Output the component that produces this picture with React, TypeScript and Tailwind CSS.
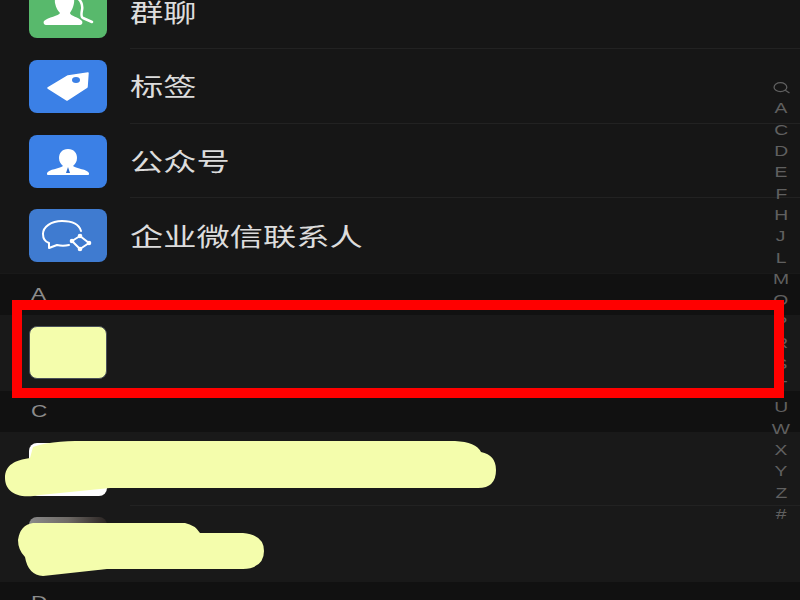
import type { ReactNode } from 'react';

const letters = ['A', 'C', 'D', 'E', 'F', 'H', 'J', 'L', 'M', 'O', 'P', 'R', 'S', 'T', 'U', 'W', 'X', 'Y', 'Z', '#'];

function IconBox({ className, children }: { className: string; children?: ReactNode }) {
  return (
    <div className={`h-[53px] w-[78px] shrink-0 overflow-hidden rounded-lg ${className}`}>
      {children && (
        <svg viewBox="0 0 78 53" className="h-full w-full">
          {children}
        </svg>
      )}
    </div>
  );
}

function Row({ icon, label, divider = true, dark = true }: { icon: ReactNode; label?: string; divider?: boolean; dark?: boolean }) {
  return (
    <div className={`flex h-[74.67px] items-center pl-[29px] ${dark ? 'bg-[#161616]' : 'bg-[#191919]'}`}>
      {icon}
      <div className={`ml-[23px] flex h-full flex-1 items-center ${divider ? 'border-b border-[#222222]' : ''}`}>
        {label && (
          <span className="origin-left scale-x-[1.33] whitespace-nowrap font-['Noto_Sans_CJK_SC',sans-serif] text-[25px] text-[#dcdcdc]">
            {label}
          </span>
        )}
      </div>
    </div>
  );
}

function Section({ letter }: { letter: string }) {
  return (
    <div className="flex h-[42px] items-center border-t border-[#191919] bg-[#111111] pl-[31px]">
      <span className="origin-left scale-x-[1.33] font-['Liberation_Sans',sans-serif] text-[17px] text-[#8c8c8c]">{letter}</span>
    </div>
  );
}

export default function App() {
  return (
    <div className="relative h-[600px] w-[800px] overflow-hidden bg-[#161616]">
      <div className="-mt-[25.5px]">
        <Row
          label="群聊"
          icon={
            <IconBox className="bg-[#58b96c]">
              <path d="M46 12 C52 14 54 20 53 25 C52 30 52 32 54 33 L63 37" fill="none" stroke="#fff" strokeWidth="2.5" strokeLinecap="round" />
              <path d="M36 5 C43 5 46 11 45 18 C44 24 42 26 41 28 C41 31 50 32 53 36 C54 38 53 40 51 40 L17 40 C15 40 14 38 15 36 C19 32 30 31 31 28 C29 26 27 23 26 18 C25 11 29 5 36 5 Z" fill="#fff" stroke="#58b96c" strokeWidth="1" paintOrder="stroke" />
            </IconBox>
          }
        />
        <Row
          label="标签"
          icon={
            <IconBox className="bg-[#3b80e6]">
              <path d="M19 28 L39 16 L59 13 L58 27 L38 40 Z" fill="#fff" stroke="#fff" strokeWidth="1.5" strokeLinejoin="round" />
              <ellipse cx="47" cy="20" rx="4" ry="3" fill="#3b80e6" />
            </IconBox>
          }
        />
        <Row
          label="公众号"
          icon={
            <IconBox className="bg-[#3b80e6]">
              <path d="M39 14 C45 14 48 18 48 23 C48 27 46 29 44 31 C48 34 58 34 60 38 C60 40 60 40 58 40 L20 40 C18 40 18 40 18 38 C20 34 30 34 34 31 C32 29 30 27 30 23 C30 18 33 14 39 14 Z" fill="#fff" />
              <path d="M39 32 L41 38 L37 38 Z" fill="#2f6fd0" />
            </IconBox>
          }
        />
        <Row
          label="企业微信联系人"
          divider={false}
          icon={
            <IconBox className="bg-[#3f7bd0]">
              <path d="M52 22 C50 15 42 12 33 12 C22 12 14 18 14 25 C14 30 17 33 20 34 L20 39 L28 36 C32 37 36 37 40 36" fill="none" stroke="#fff" strokeWidth="2" strokeLinejoin="round" strokeLinecap="round" />
              <path d="M51 27 L60 34 L51 40 L43 32 Z" fill="none" stroke="#fff" strokeWidth="2" strokeLinejoin="round" />
              <circle cx="51" cy="27" r="2.3" fill="#fff" />
              <circle cx="60" cy="34" r="2.3" fill="#fff" />
              <circle cx="51" cy="40" r="2.3" fill="#fff" />
              <circle cx="43" cy="32" r="2.3" fill="#fff" />
            </IconBox>
          }
        />
        <Section letter="A" />
        <Row dark={false} divider={false} icon={<IconBox className="border border-[#4a5058] bg-[#f4fdac]" />} />
        <Section letter="C" />
        <Row dark={false} icon={<IconBox className="bg-white" />} />
        <Row dark={false} divider={false} icon={<IconBox className="bg-gradient-to-r from-[#8a8a8a] via-[#6e6a66] to-[#2a2422]" />} />
        <Section letter="D" />
      </div>

      {/* side index */}
      <div className="absolute left-[770px] top-[77px] flex w-[22px] flex-col items-center font-['Liberation_Sans',sans-serif] text-[14.5px] leading-[21.35px] text-[#606060]">
        <svg viewBox="0 0 16 12" className="h-[21.35px] w-[17px]">
          <ellipse cx="7" cy="5.5" rx="6" ry="4.2" fill="none" stroke="#606060" strokeWidth="1.2" />
          <path d="M11.5 8.5 L15.5 11" stroke="#606060" strokeWidth="1.2" />
        </svg>
        {letters.map((l) => (
          <span key={l} className="scale-x-[1.33]">
            {l}
          </span>
        ))}
      </div>

      {/* red annotation frame */}
      <div className="absolute left-[12px] top-[300px] h-[98px] w-[772px] border-[10px] border-[#ff0000]" />

      {/* yellow scribbles hiding names */}
      <svg viewBox="0 0 800 600" className="absolute inset-0 h-[600px] w-[800px]">
        <path
          d="M33 447 C50 441 70 441 90 441 L455 441 Q476 442 481 452 Q496 455 496 470 Q496 488 478 488 L110 488 L40 495 C15 500 5 490 5 478 C5 465 15 460 30 458 Z"
          fill="#f4fdac"
        />
        <path
          d="M33 523 L185 523 Q195 525 200 533 L243 533 Q264 535 264 551 Q264 568 243 569 L107 569 L43 576 Q28 575 25 557 Q18 550 18 540 Q20 525 33 523 Z"
          fill="#f4fdac"
        />
      </svg>
    </div>
  );
}
